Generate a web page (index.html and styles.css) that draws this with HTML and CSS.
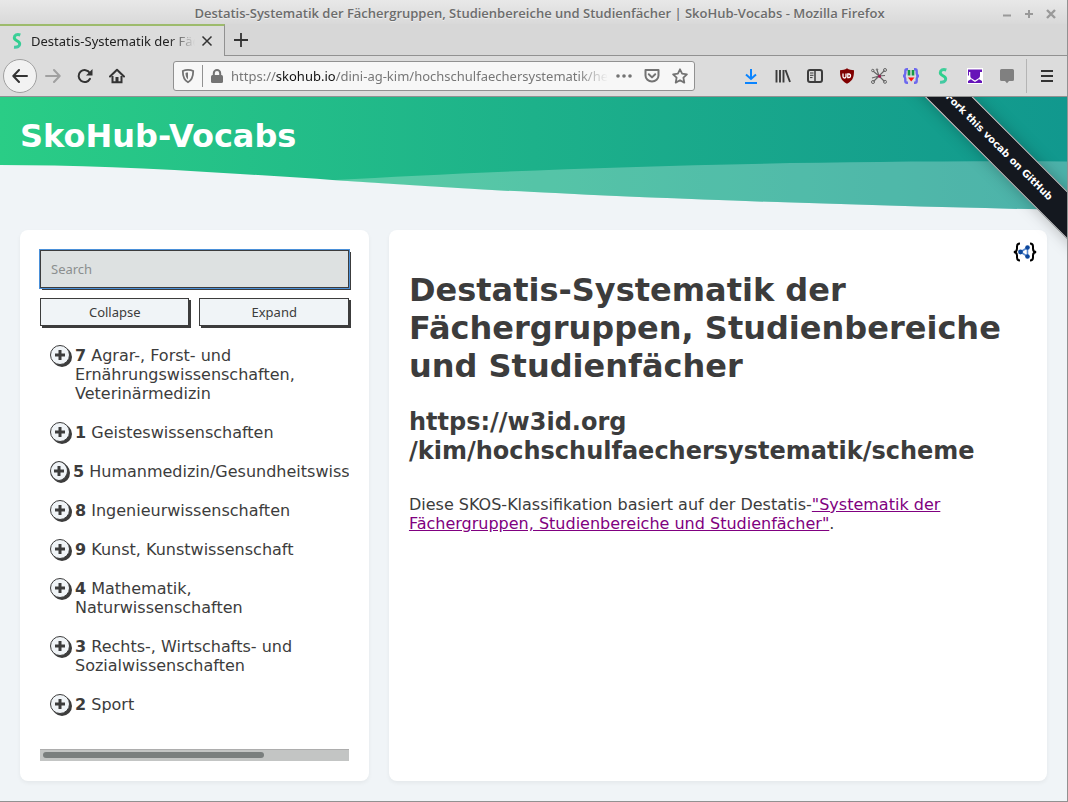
FILE: index.html
```html
<!DOCTYPE html>
<html lang="de">
<head>
<meta charset="utf-8">
<title>Destatis-Systematik der Fächergruppen, Studienbereiche und Studienfächer | SkoHub-Vocabs</title>
<link rel="stylesheet" href="styles.css">
</head>
<body>
<svg class="defs" aria-hidden="true">
  <defs>
    <linearGradient id="s-grad" x1="0" y1="0" x2="0" y2="1">
      <stop offset="0" stop-color="#3fcf9a"/><stop offset=".5" stop-color="#2bd08a"/><stop offset="1" stop-color="#45c9a4"/>
    </linearGradient>
    <symbol id="skohub" viewBox="0 0 16 16">
      <path d="M11.300 2C8 .8 5.300 2.200 5.300 4.800c0 3.200 5.400 2.800 5.400 6.200 0 2.500-2.200 3.500-5.700 3.200" fill="none" stroke="url(#s-grad)" stroke-width="3"/>
    </symbol>
    <symbol id="plus" viewBox="0 0 12 12"><path d="M6 1v10M1 6h10" stroke="#3c3c3c" stroke-width="3"/></symbol>
  </defs>
</svg>
<div class="window">
  <div class="titlebar">
    <span class="window-title">Destatis-Systematik der Fächergruppen, Studienbereiche und Studienfächer | SkoHub-Vocabs - Mozilla Firefox</span>
    <div class="window-buttons">
      <button aria-label="Minimieren"><svg viewBox="0 0 12 12"><path d="M2 7.500h8" stroke="#999" stroke-width="2"/></svg></button>
      <button aria-label="Maximieren"><svg viewBox="0 0 12 12"><path d="M6 2v8M2 6h8" stroke="#999" stroke-width="2"/></svg></button>
      <button aria-label="Schließen"><svg viewBox="0 0 12 12"><path d="M2 2l8 8M10 2l-8 8" stroke="#999" stroke-width="2.400"/></svg></button>
    </div>
  </div>
  <div class="tabs">
    <div class="tab">
      <svg class="favicon" viewBox="0 0 16 16"><use href="#skohub"/></svg>
      <span class="tab-label">Destatis-Systematik der Fäc</span>
      <button class="tab-close" aria-label="Tab schließen"><svg viewBox="0 0 12 12"><path d="M1.500 1.500l9 9M10.500 1.500l-9 9" stroke="#333" stroke-width="1.500"/></svg></button>
    </div>
    <div class="tab-rest"><button aria-label="Neuer Tab"><svg viewBox="0 0 16 16"><path d="M8 1v14M1 8h14" stroke="#333" stroke-width="1.800"/></svg></button></div>
  </div>
  <div class="toolbar">
    <button class="tool back" aria-label="Zurück"><svg viewBox="0 0 16 16"><path d="M15 8H1.500M7 2L1.300 8 7 14" fill="none" stroke="#333" stroke-width="2" stroke-linecap="round" stroke-linejoin="round"/></svg></button>
    <button class="tool" aria-label="Vor"><svg viewBox="0 0 16 16"><path d="M1 8h13.500M9 2l5.700 6L9 14" fill="none" stroke="#a0a0a0" stroke-width="2" stroke-linecap="round" stroke-linejoin="round"/></svg></button>
    <button class="tool" aria-label="Neu laden"><svg viewBox="0 0 16 16"><path d="M12.800 5A6 6 0 1 0 13 10.800" fill="none" stroke="#333" stroke-width="2" stroke-linecap="round"/><path d="M15.500 1v6.500H9z" fill="#333"/></svg></button>
    <button class="tool" aria-label="Startseite"><svg viewBox="0 0 16 16"><path d="M1 8.500L8 1.700l7 6.800" fill="none" stroke="#333" stroke-width="2" stroke-linecap="round" stroke-linejoin="round"/><path d="M3.500 8v6.200h9V8" fill="none" stroke="#333" stroke-width="2"/><path d="M6.500 9h3v5h-3z" fill="#333"/></svg></button>
    <div class="urlbar">
      <svg class="shield" viewBox="0 0 16 16"><path d="M8 1.800c2 0 3.700.4 5.200 1.200 0 5.500-1 9-5.200 11.200C3.800 12 2.800 8.500 2.800 3 4.300 2.200 6 1.800 8 1.800z" fill="none" stroke="#737373" stroke-width="1.800"/><path d="M8 4.500v7C6.200 10 5.500 8 5.500 5 6.300 4.600 7 4.500 8 4.500z" fill="#737373"/></svg>
      <span class="url-separator"></span>
      <svg class="lock" viewBox="0 0 16 16"><path d="M4.800 8V5.200a3.200 3.200 0 0 1 6.400 0V8" fill="none" stroke="#737373" stroke-width="2"/><rect x="2" y="7" width="12" height="8" rx="1.500" fill="#737373"/></svg>
      <span class="url">https://<b>skohub.io</b>/dini-ag-kim/hochschulfaechersystematik/heads</span>
      <div class="url-actions">
        <svg viewBox="0 0 16 16"><g fill="#737373"><circle cx="2" cy="8" r="1.800"/><circle cx="8" cy="8" r="1.800"/><circle cx="14" cy="8" r="1.800"/></g></svg>
        <svg viewBox="0 0 16 16"><path d="M1.500 2h13v5.500a6.500 6 0 0 1-13 0z" fill="none" stroke="#737373" stroke-width="2" stroke-linejoin="round"/><path d="M4.800 6.300L8 9.400l3.200-3.100" fill="none" stroke="#737373" stroke-width="2" stroke-linecap="round" stroke-linejoin="round"/></svg>
        <svg viewBox="0 0 16 16"><path d="M8 1.300l2.100 4.400 4.800.6-3.500 3.400.9 4.900L8 12.200l-4.300 2.400.9-4.900L1.100 6.300l4.800-.6z" fill="none" stroke="#737373" stroke-width="1.800" stroke-linejoin="round"/></svg>
      </div>
    </div>
    <button class="tool" aria-label="Downloads"><svg viewBox="0 0 16 16"><path d="M8 1v10M3 6.500L8 11l5-4.500M2 15h12" fill="none" stroke="#0a84ff" stroke-width="2"/></svg></button>
    <button class="tool" aria-label="Bibliothek"><svg viewBox="0 0 16 16"><path d="M1.500 2v12.500M5 2v12.500M8.500 2v12.500M10.500 2l4.500 12" fill="none" stroke="#3c3c3c" stroke-width="1.900"/></svg></button>
    <button class="tool" aria-label="Seitenleiste"><svg viewBox="0 0 16 16"><rect x="1" y="2" width="14" height="12" rx="2" fill="none" stroke="#3c3c3c" stroke-width="2"/><path d="M8 2v12" stroke="#3c3c3c" stroke-width="1.500"/><path d="M3 5h3.500M3 7.300h3.500M3 9.600h2.500" stroke="#3c3c3c"/></svg></button>
    <button class="tool" aria-label="uBlock Origin"><svg viewBox="0 0 16 16"><path d="M8 .3c2 1.500 4.500 1.900 7 2 0 6.200-.5 10.200-7 13.400C1.500 12.500 1 8.500 1 2.300c2.500-.1 5-.5 7-2z" fill="#800000"/><path d="M4 5.500v3a1.500 1.500 0 0 0 3 0v-3" fill="none" stroke="#fff" stroke-width="1.300"/><path d="M8.800 6h1.300a1.900 1.900 0 0 1 0 3.700H8.800z" fill="none" stroke="#fff" stroke-width="1.300"/></svg></button>
    <button class="tool" aria-label="Netzwerk"><svg viewBox="0 0 16 16"><g fill="none" stroke="#666"><path d="M2 3l6 5 5.500-5.500M8 8l5.500 5.500M8 8l-5.500 5.500M8 8l-7 2M8 8l6-.5M6 2l2 6" stroke-width="1.200"/><circle cx="1.800" cy="2.500" r="1.200"/><circle cx="14" cy="2" r="1.500"/><circle cx="14" cy="13.800" r="1.500"/><circle cx="2" cy="14" r="1.500"/><circle cx="6" cy="1.500" r=".7"/></g><circle cx="8.500" cy="8.300" r="1.500" fill="#a01850"/></svg></button>
    <button class="tool" aria-label="OER"><svg viewBox="0 0 16 16"><path d="M5 1.200H4C2.800 1.200 2.300 2 2.300 3.200v2C2.300 7 1.700 7.600.5 8c1.200.4 1.800 1 1.800 2.800v2c0 1.200.5 2 1.700 2h1M11 1.200h1c1.200 0 1.700.8 1.700 2v2c0 1.800.6 2.400 1.800 2.800-1.200.4-1.800 1-1.800 2.800v2c0 1.200-.5 2-1.700 2h-1" fill="none" stroke="#6c68ee" stroke-width="2.400"/><path d="M4.700 2h2.600v5.500H4.700zM8.700 2h2.600v5.500H8.700z" fill="#159947"/><path d="M5 9.500h6.500L8.200 13.500z" fill="#ff1010"/></svg></button>
    <button class="tool" aria-label="SkoHub"><svg viewBox="0 0 16 16"><use href="#skohub"/></svg></button>
    <button class="tool" aria-label="Scholar"><svg viewBox="0 0 16 16"><path fill="#fff" d="M0 0h16v16H0z"/><path d="M1 1.500h14V4h-2v3.500c0 1.700-.7 2.500-2 3l4 2.500v2H1v-2l4-2.500C3.700 10 3.300 9 3.300 7.500V4H2v3.500H1z" fill="#6614b8"/><path d="M4.500 11l3.500 2.200 3.500-2.200" fill="none" stroke="#fff" stroke-width="1.200"/></svg></button>
    <button class="tool" aria-label="Notizen"><svg viewBox="0 0 16 16"><path d="M2.500 1h11q1.500 0 1.500 1.500v9q0 1.500-1.500 1.500H10l-2 2.300L6 13H2.500Q1 13 1 11.500v-9Q1 1 2.500 1z" fill="#808080"/></svg></button>
    <span class="tool-separator"></span>
    <button class="tool" aria-label="Menü"><svg viewBox="0 0 16 16"><path d="M2 3h12M2 8h12M2 13h12" stroke="#333" stroke-width="2"/></svg></button>
  </div>

  <div class="page">
    <header class="header">
      <svg class="wave" viewBox="0 0 1067 113" preserveAspectRatio="none" aria-hidden="true">
        <defs><linearGradient id="wave-grad" gradientUnits="userSpaceOnUse" x1="0" y1="0" x2="1067" y2="0"><stop offset="0" stop-color="#2acd86"/><stop offset=".5" stop-color="#1db18a"/><stop offset="1" stop-color="#11988e"/></linearGradient></defs>
        <path d="M0 0H1067V113C880 109 690 103 534 95C420 90 340 83 240 77C150 71 70 68 0 68Z" fill="url(#wave-grad)"/>
        <path d="M335 83C500 74 740 63 1067 64.500V113C880 109 690 103 534 95C460 92 400 88 335 83Z" fill="#fff" fill-opacity=".25"/>
      </svg>
      <div class="brand">SkoHub-Vocabs</div>
    </header>
    <div class="ribbon"><a href="#github">Fork this vocab on GitHub</a></div>
    <div class="columns">
      <nav class="panel sidebar">
        <input class="search" type="text" placeholder="Search" aria-label="Search">
        <div class="actions"><button>Collapse</button><button>Expand</button></div>
        <ul class="tree">
          <li><button aria-label="7 aufklappen"><svg viewBox="0 0 12 12"><use href="#plus"/></svg></button><span><b>7</b> Agrar-, Forst- und Ernährungswissenschaften, Veterinärmedizin</span></li>
          <li><button aria-label="1 aufklappen"><svg viewBox="0 0 12 12"><use href="#plus"/></svg></button><span><b>1</b> Geisteswissenschaften</span></li>
          <li class="overlong"><button aria-label="5 aufklappen"><svg viewBox="0 0 12 12"><use href="#plus"/></svg></button><span><b>5</b> Humanmedizin/Gesundheitswissenschaften</span></li>
          <li><button aria-label="8 aufklappen"><svg viewBox="0 0 12 12"><use href="#plus"/></svg></button><span><b>8</b> Ingenieurwissenschaften</span></li>
          <li><button aria-label="9 aufklappen"><svg viewBox="0 0 12 12"><use href="#plus"/></svg></button><span><b>9</b> Kunst, Kunstwissenschaft</span></li>
          <li><button aria-label="4 aufklappen"><svg viewBox="0 0 12 12"><use href="#plus"/></svg></button><span><b>4</b> Mathematik, Naturwissenschaften</span></li>
          <li><button aria-label="3 aufklappen"><svg viewBox="0 0 12 12"><use href="#plus"/></svg></button><span><b>3</b> Rechts-, Wirtschafts- und Sozialwissenschaften</span></li>
          <li><button aria-label="2 aufklappen"><svg viewBox="0 0 12 12"><use href="#plus"/></svg></button><span><b>2</b> Sport</span></li>
        </ul>
        <div class="scrollbar"><div class="thumb"></div></div>
      </nav>
      <main class="panel content">
        <a class="json-link" href="#json" aria-label="JSON-LD"><svg viewBox="0 0 24 20"><path d="M7 1.500C4.500 1.500 4 2.500 4 4.500v2C4 9 3 10 .8 10 3 10 4 11 4 13.500v2c0 2 .5 3 3 3M17 1.500c2.500 0 3 1 3 3v2C20 9 21 10 23.200 10 21 10 20 11 20 13.500v2c0 2-.5 3-3 3" fill="none" stroke="#000" stroke-width="2"/><path d="M7.500 10l7-4.500v9z" fill="none" stroke="#5b8bd0" stroke-width="1.600"/><g fill="#0c479c"><circle cx="7.500" cy="10" r="2.400"/><circle cx="14.500" cy="5.500" r="2.300"/><circle cx="14.500" cy="14.500" r="2.300"/></g></svg></a>
        <h1>Destatis-Systematik der Fächergruppen, Studienbereiche und Studienfächer</h1>
        <h2>https://w3id.org<wbr>/kim/hochschulfaechersystematik/scheme</h2>
        <p>Diese SKOS-Klassifikation basiert auf der Destatis-<a href="#destatis">"Systematik der Fächergruppen, Studienbereiche und Studienfächer"</a>.</p>
      </main>
    </div>
  </div>
</div>
</body>
</html>
```
FILE: styles.css
```css
* { box-sizing: border-box; }

body {
  margin: 0;
  color: #3c3c3c;
  font: 16px/19px "DejaVu Sans", sans-serif;
}

button { margin: 0; padding: 0; border: 0; background: none; font: inherit; color: inherit; }
svg { display: block; flex: none; }
.defs { position: absolute; width: 0; height: 0; }

.window {
  display: flex;
  flex-direction: column;
  min-height: 100vh;
  border: solid #919191;
  border-width: 0 1px 1px 0;
  background: #dcdcdc;
}

/* Browser chrome */
.titlebar, .tabs, .toolbar { font-family: "Noto Sans", sans-serif; font-size: 13px; }

.titlebar {
  display: flex;
  align-items: center;
  height: 24px;
  padding: 3px 10px 0 78px;
  background: linear-gradient(#e8e8e8, #d9d9d9);
}
.window-title {
  flex: 1;
  overflow: hidden;
  color: #6c6c6c;
  font-family: "Open Sans", sans-serif;
  font-weight: 600;
  text-align: center;
  text-shadow: 0 1px #eee;
  white-space: nowrap;
}
.window-buttons { display: flex; gap: 10px; }
.window-buttons svg { width: 12px; height: 12px; }

.tabs { display: flex; height: 32px; background: #d7d7d7; }
.tab {
  display: flex;
  align-items: center;
  gap: 6px;
  width: 225px;
  padding: 0 11px 0 9px;
  border-top: 2px solid #9dbb6c;
  border-right: 1px solid #919191;
  background: #dcdcdc;
}
.favicon { width: 16px; height: 16px; }
.tab-label {
  flex: 1;
  overflow: hidden;
  color: #222;
  white-space: nowrap;
  mask-image: linear-gradient(to right, #000 84%, transparent);
}
.tab-close svg { width: 12px; height: 12px; }
.tab-rest {
  display: flex;
  flex: 1;
  align-items: center;
  padding-left: 8px;
  border-bottom: 1px solid #919191;
}
.tab-rest svg { width: 16px; height: 16px; }

.toolbar {
  display: flex;
  align-items: center;
  height: 41px;
  padding: 0 4px 0 3px;
  border-bottom: 1px solid #919191;
}
.tool { display: grid; place-items: center; width: 32px; height: 34px; }
.tool svg { width: 16px; height: 16px; }
.back { width: 34px; border: 1px solid #a0a0a0; border-radius: 50%; background: #f2f2f2; }
.tool-separator { width: 1px; height: 34px; margin: 0 4px 0 3px; background: #b4b4b4; }

.urlbar {
  display: flex;
  flex: 1;
  align-items: center;
  min-width: 0;
  height: 30px;
  margin: 0 40px;
  padding: 0 6px;
  border: 1px solid #919191;
  border-radius: 3px;
  background: #f7f7f7;
}
.urlbar svg { width: 16px; height: 16px; }
.url-separator { width: 1px; height: 22px; margin: 0 6px; background: #919191; }
.url {
  flex: 1;
  overflow: hidden;
  margin: 0 8px 0 6px;
  color: #777;
  font-size: 13px;
  white-space: nowrap;
  mask-image: linear-gradient(to right, #000 92%, transparent);
}
.url b { color: #111; font-weight: 400; }
.url-actions { display: flex; gap: 12px; }

/* Page */
.page {
  position: relative;
  display: flex;
  flex: 1;
  flex-direction: column;
  overflow: hidden;
  background: #f0f4f7;
}

.header { display: grid; height: 113px; }
.wave, .brand { grid-area: 1 / 1; }
.wave { width: 100%; height: 113px; }
.brand { padding: 20px; color: #fff; font-size: 32px; font-weight: 700; line-height: 38px; }

.ribbon {
  position: absolute;
  top: 0;
  right: 0;
  z-index: 1;
  width: 180px;
  height: 180px;
  overflow: hidden;
}
.ribbon a {
  position: absolute;
  top: 33px;
  left: -38px;
  width: 300px;
  height: 34px;
  border: solid #d8d8d8;
  border-width: 1px 0;
  background: #14181f;
  box-shadow: 0 0 15px rgba(0, 0, 0, .25);
  color: #fff;
  font-size: 10px;
  font-weight: 700;
  line-height: 32px;
  text-align: center;
  text-decoration: none;
  transform: rotate(45deg);
}

.columns {
  display: grid;
  flex: 1;
  grid-template-columns: 35fr 66fr;
  gap: 20px;
  padding: 20px;
}
.panel {
  min-width: 0;
  padding: 20px;
  border-radius: 8px;
  background: #fff;
  box-shadow: 0 2px 4px rgba(0, 0, 0, .05);
}

.sidebar { display: flex; flex-direction: column; }
.search {
  height: 38px;
  padding: 0 10px;
  border: 1px solid #3c3c3c;
  border-radius: 0;
  outline: 1px solid #4a90d9;
  background: #dde1e1;
  box-shadow: 2px 2px #3c3c3c;
  font: 13px "Noto Sans", sans-serif;
}
.search::placeholder { color: #8b8f8f; }
.actions { display: flex; gap: 10px; margin-top: 10px; }
.actions button {
  flex: 1;
  height: 28px;
  border: 1px solid #3c3c3c;
  background: #f0f4f7;
  box-shadow: 2px 2px #3c3c3c;
  font: 13px "Noto Sans", sans-serif;
}

.tree {
  display: flex;
  flex: 1;
  flex-direction: column;
  gap: 20px;
  margin: 0;
  padding: 20px 0 0 10px;
  overflow: hidden;
  list-style: none;
}
.tree li { display: flex; align-items: flex-start; }
.tree button {
  display: grid;
  flex: none;
  place-items: center;
  width: 20px;
  height: 20px;
  margin: -1px 5px 0 0;
  border: 1px solid #3c3c3c;
  border-radius: 50%;
  background: #f0f4f7;
  box-shadow: 2px 2px #3c3c3c;
}
.tree svg { width: 12px; height: 12px; }
.tree .overlong { white-space: nowrap; }
.tree .overlong button { width: 18px; }

.scrollbar { padding: 2px 3px 3px; border-top: 1px solid #adadad; background: #c3c5c4; }
.thumb { width: 73%; height: 6px; border-radius: 3px; background: #7a7f7e; }

.content { position: relative; }
.json-link { position: absolute; top: 12px; right: 10px; }
.json-link svg { width: 24px; height: 20px; }
h1 { margin: 21px 0 23px; font-size: 32px; line-height: 38px; }
h2 { margin: 0 0 29px; font-size: 24px; line-height: 29px; }
p { margin: 0; }
p a { color: #800080; }
```
